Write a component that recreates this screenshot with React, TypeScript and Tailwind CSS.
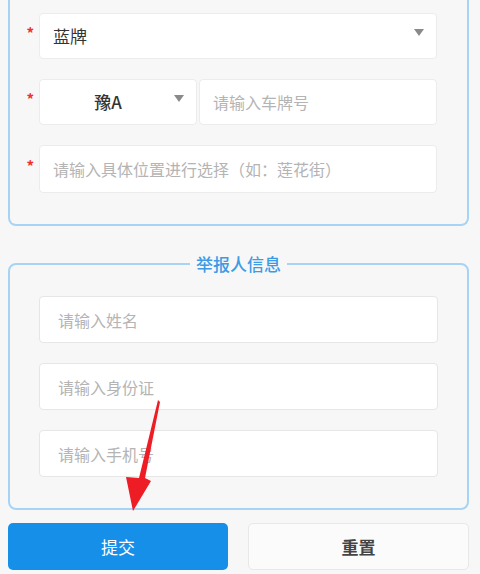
function Star() {
  return <span className="w-[29px] pr-[5px] text-right text-[15px] leading-none font-bold text-[#f0302a] -mt-[7px]">*</span>;
}

function Caret({ className = '' }: { className?: string }) {
  return (
    <svg viewBox="0 0 10 7" className={`h-[7px] w-[10px] ${className}`}>
      <path d="M0 0 H10 L5 7 Z" fill="#8a8a8a" />
    </svg>
  );
}

function PlainInput({ placeholder }: { placeholder: string }) {
  return (
    <div className="ml-[29px] flex h-[47px] w-[399px] items-center rounded-[4px] border border-[#e6e6e6] bg-white pl-[18px] text-[16px] text-[#b4b4b4]">
      {placeholder}
    </div>
  );
}

export default function App() {
  return (
    <div
      className="relative h-[574px] w-[480px] overflow-hidden bg-[#f7f7f7]"
      style={{ fontFamily: '"Noto Sans CJK SC", "Noto Sans", sans-serif' }}
    >
      <div className="-mt-[10px] ml-[8px] w-[461px] rounded-b-[8px] border-2 border-t-0 border-[#a7d4f4] pt-[23px] pb-[31px]">
        <div className="flex flex-col gap-[20px]">
          <div className="flex items-center">
            <Star />
            <div className="flex h-[46px] w-[398px] items-center justify-between rounded-[4px] border border-[#ececec] bg-white pl-[13px] pr-[12px] text-[17px] text-[#333]">
              <span>蓝牌</span>
              <Caret className="-mt-[8px]" />
            </div>
          </div>

          <div className="flex items-center">
            <Star />
            <div className="flex h-[46px] w-[158px] items-center rounded-[4px] border border-[#ececec] bg-white text-[17px] font-medium text-[#333]">
              <span className="flex-1 pl-[2px] text-center">豫A</span>
              <Caret className="-mt-[8px] mr-[12px]" />
            </div>
            <div className="ml-[2px] flex h-[46px] w-[238px] items-center rounded-[4px] border border-[#ececec] bg-white pl-[13px] text-[16px] text-[#b4b4b4]">
              请输入车牌号
            </div>
          </div>

          <div className="flex items-center">
            <Star />
            <div className="flex h-[48px] w-[398px] items-center rounded-[4px] border border-[#ececec] bg-white pl-[13px] text-[16px] text-[#b4b4b4]">
              请输入具体位置进行选择（如：莲花街）
            </div>
          </div>
        </div>
      </div>

      <fieldset className="ml-[8px] mt-[28px] w-[461px] rounded-[8px] border-2 border-[#a7d4f4] pt-[22px] pb-[31px]">
        <legend className="mx-auto px-[6px] text-[17px] leading-[20px] font-medium text-[#3d9be6]">举报人信息</legend>
        <div className="flex flex-col gap-[20px]">
          <PlainInput placeholder="请输入姓名" />
          <PlainInput placeholder="请输入身份证" />
          <PlainInput placeholder="请输入手机号" />
        </div>
      </fieldset>

      <div className="ml-[8px] mt-[13px] flex w-[461px] gap-[20px]">
        <button className="flex h-[47px] w-[220px] items-center justify-center rounded-[5px] bg-[#168fe8] text-[17px] text-white">
          提交
        </button>
        <button className="flex h-[47px] w-[221px] items-center justify-center rounded-[5px] border border-[#e8e8e8] bg-[#fbfbfb] text-[17px] font-bold text-[#444]">
          重置
        </button>
      </div>

      <svg className="pointer-events-none absolute inset-0" width="480" height="574" viewBox="0 0 480 574">
        <path d="M158 400 L160 402 L145 478 L151 481 L133 511 L126 477 L139 478 Z" fill="#ee1c25" />
      </svg>
    </div>
  );
}
